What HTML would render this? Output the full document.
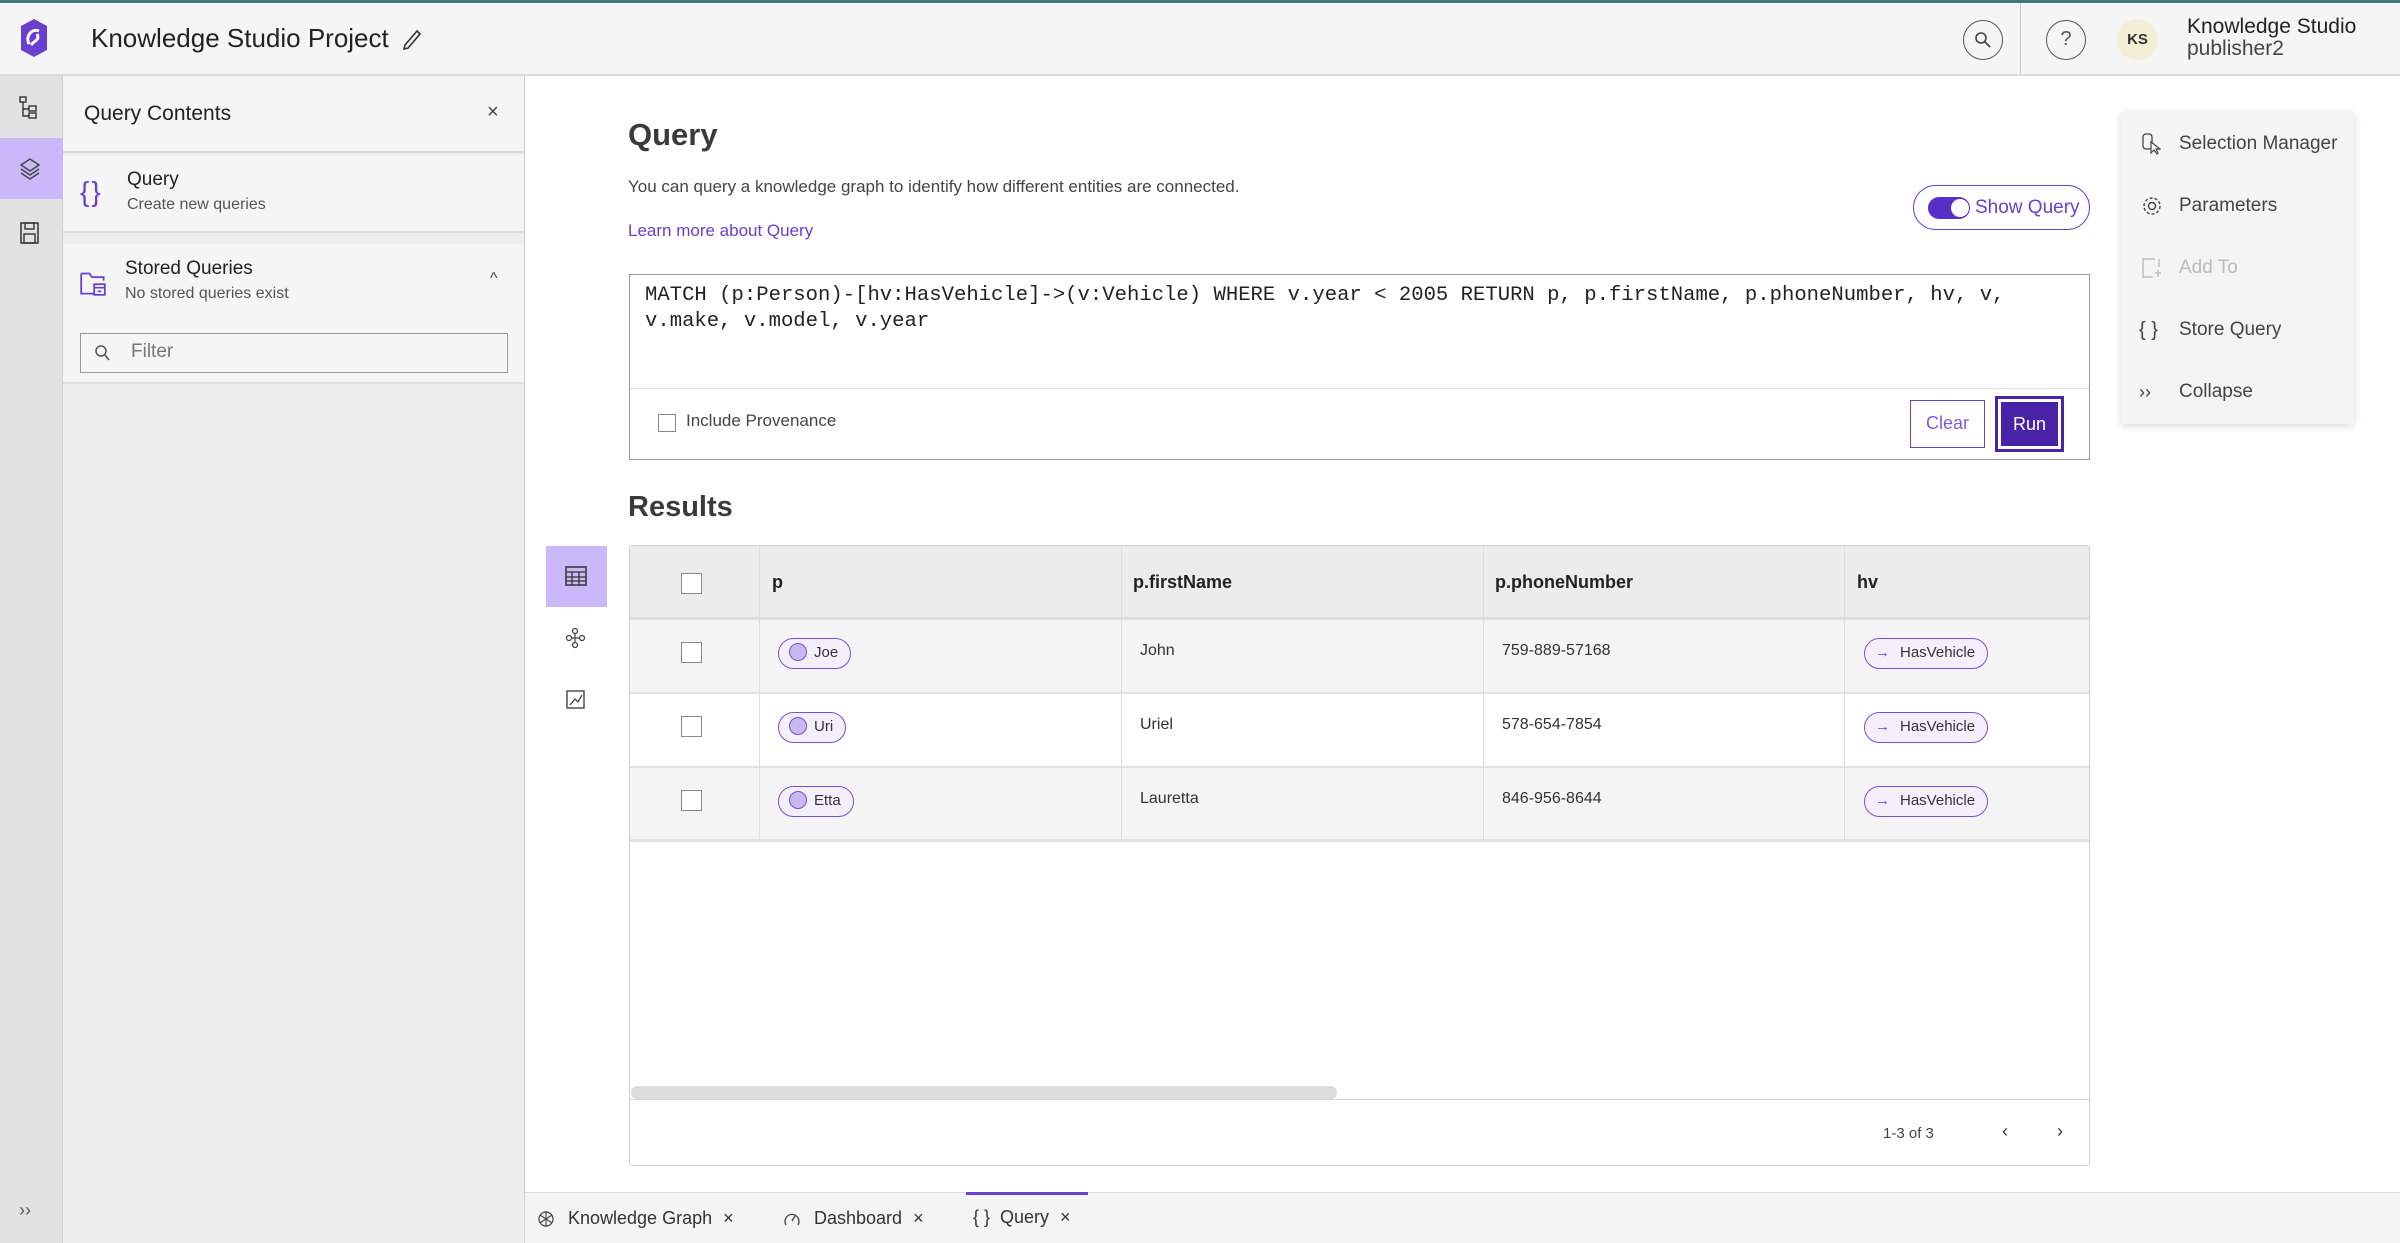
<!DOCTYPE html>
<html><head><meta charset="utf-8"><style>
*{box-sizing:border-box;margin:0;padding:0}
body{width:2400px;height:1243px;overflow:hidden;background:#fff;font-family:"Liberation Sans",sans-serif;color:#323232;position:relative}
.a{position:absolute}
.hdr{left:0;top:0;width:2400px;height:76px;background:#f5f5f5;border-top:3px solid #3d7a7a;border-bottom:2px solid #dcdcdc}
.rail{left:0;top:76px;width:63px;height:1167px;background:#e2e2e2;border-right:1px solid #d0d0d0}
.panel{left:63px;top:76px;width:462px;height:1167px;background:#eeeeee;border-right:1px solid #d4d4d4}
.t{white-space:nowrap}
.tbl{left:629px;top:545px;width:1461px;height:621px;border:1px solid #cfcfcf;border-radius:3px;background:#fff;overflow:hidden}
.row{position:absolute;left:0;width:1461px;height:74px;border-bottom:2px solid #e2e2e2}
.cell{position:absolute;top:0;height:100%;border-left:1px solid #dedede}
.cb{position:absolute;left:51px;width:21px;height:21px;border:1.5px solid #888;background:#fff}
.chip{position:absolute;height:31px;border:1.5px solid #7a4fd6;border-radius:16px;background:#f3f0fb;font-size:15px;line-height:28px;padding:0 12px 0 10px;color:#333}
.chip i{display:inline-block;width:18px;height:18px;border-radius:50%;background:#c9b8f0;border:1.5px solid #7a4fd6;vertical-align:-4px;margin-right:7px}
.menu div{height:62px;font-size:19px;color:#444;line-height:62px;padding-left:58px;position:relative}
</style></head><body>

<div class="a hdr"></div>
<svg class="a" style="left:20px;top:18px" width="28" height="40" viewBox="0 0 28 40"><polygon points="14,1 27,8 27,32 14,39 1,32 1,8" fill="#6a3fd0"/><path d="M9 26 C5 18 12 10 19 13 M11 27 C15 22 20 22 17 16" stroke="#fff" stroke-width="3" fill="none"/></svg>
<div class="a t" style="left:91px;top:23px;font-size:26px;color:#222">Knowledge Studio Project</div>
<svg class="a" style="left:402px;top:29px" width="20" height="22" viewBox="0 0 20 22"><path d="M15 2 L18 5 L6 19 L2 20 L3 16 Z" stroke="#333" stroke-width="1.6" fill="none"/></svg>
<div class="a" style="left:1963px;top:20px;width:40px;height:40px;border:1.5px solid #555;border-radius:50%"></div>
<svg class="a" style="left:1974px;top:31px" width="18" height="18" viewBox="0 0 18 18"><circle cx="7" cy="7" r="5" stroke="#444" stroke-width="1.6" fill="none"/><path d="M11 11 L16 16" stroke="#444" stroke-width="1.8"/></svg>
<div class="a" style="left:2020px;top:3px;width:1px;height:72px;background:#ccc"></div>
<div class="a" style="left:2046px;top:20px;width:40px;height:40px;border:1.5px solid #555;border-radius:50%;text-align:center;line-height:37px;font-size:20px;color:#555">?</div>
<div class="a" style="left:2117px;top:19px;width:41px;height:41px;border-radius:50%;background:#f2efd6;text-align:center;line-height:41px;font-size:15px;font-weight:bold;color:#333">KS</div>
<div class="a t" style="left:2187px;top:16px;font-size:21px;color:#222;line-height:22px">Knowledge Studio<br><span style="color:#444">publisher2</span></div>

<div class="a rail"></div>
<div class="a" style="left:0;top:138px;width:63px;height:61px;background:#cbb8fa"></div>
<svg class="a" style="left:19px;top:96px" width="22" height="24" viewBox="0 0 22 24"><rect x="1" y="1" width="6" height="5" fill="none" stroke="#333" stroke-width="1.4"/><path d="M4 6 V20 H10 M4 13 H10" stroke="#333" stroke-width="1.4" fill="none"/><rect x="10" y="10" width="7" height="5" fill="none" stroke="#333" stroke-width="1.4"/><rect x="10" y="17" width="7" height="5" fill="none" stroke="#333" stroke-width="1.4"/></svg>
<svg class="a" style="left:19px;top:157px" width="22" height="24" viewBox="0 0 22 24"><path d="M11 2 L20 8 L11 14 L2 8 Z M2 12 L11 18 L20 12 M2 16 L11 22 L20 16" stroke="#444" stroke-width="1.4" fill="none"/></svg>
<svg class="a" style="left:20px;top:222px" width="20" height="22" viewBox="0 0 20 22"><rect x="1" y="1" width="17" height="20" fill="none" stroke="#333" stroke-width="1.5"/><rect x="5" y="1" width="9" height="6" fill="none" stroke="#333" stroke-width="1.4"/><rect x="4" y="12" width="11" height="9" fill="none" stroke="#333" stroke-width="1.4"/></svg>
<div class="a t" style="left:19px;top:1200px;font-size:18px;color:#555">››</div>

<div class="a panel"></div>
<div class="a" style="left:63px;top:77px;width:461px;height:76px;background:#f5f5f5;border-bottom:2px solid #d9d9d9"></div>
<div class="a t" style="left:84px;top:102px;font-size:21px;color:#222">Query Contents</div>
<div class="a t" style="left:487px;top:101px;font-size:20px;color:#444">×</div>
<div class="a" style="left:63px;top:155px;width:461px;height:78px;background:#f5f5f5;border-bottom:2px solid #dcdcdc"></div>
<div class="a t" style="left:80px;top:176px;font-size:28px;color:#6a3fd0;letter-spacing:2px">{}</div>
<div class="a t" style="left:127px;top:169px;font-size:19px;color:#222">Query</div>
<div class="a t" style="left:127px;top:196px;font-size:16px;color:#555">Create new queries</div>
<div class="a" style="left:63px;top:244px;width:461px;height:140px;background:#f5f5f5;border-bottom:2px solid #e0e0e0"></div>
<svg class="a" style="left:80px;top:270px" width="26" height="26" viewBox="0 0 22 22"><path d="M1 3 H8 L10 6 H20 V9 M1 3 V20 H12" stroke="#6a3fd0" stroke-width="1.5" fill="none"/><rect x="12" y="12" width="9" height="9" fill="none" stroke="#6a3fd0" stroke-width="1.5"/><path d="M12 15 H21 M15 18 H18" stroke="#6a3fd0" stroke-width="1.4"/></svg>
<div class="a t" style="left:125px;top:258px;font-size:19px;color:#222">Stored Queries</div>
<div class="a t" style="left:125px;top:285px;font-size:16px;color:#555">No stored queries exist</div>
<div class="a t" style="left:490px;top:270px;font-size:16px;color:#444">^</div>
<div class="a" style="left:80px;top:333px;width:428px;height:40px;border:1.5px solid #999;background:#f5f5f5"></div>
<svg class="a" style="left:94px;top:344px" width="18" height="18" viewBox="0 0 18 18"><circle cx="7" cy="7" r="5" stroke="#555" stroke-width="1.5" fill="none"/><path d="M11 11 L15 16" stroke="#555" stroke-width="1.6"/></svg>
<div class="a t" style="left:131px;top:341px;font-size:19px;color:#777">Filter</div>

<div class="a t" style="left:628px;top:117px;font-size:31px;font-weight:bold;color:#3a3a3a">Query</div>
<div class="a t" style="left:628px;top:177px;font-size:17px;color:#444">You can query a knowledge graph to identify how different entities are connected.</div>
<div class="a t" style="left:628px;top:221px;font-size:17px;color:#6a3fd0">Learn more about Query</div>
<div class="a" style="left:1913px;top:185px;width:177px;height:45px;border:1.5px solid #6a3fd0;border-radius:23px"></div>
<div class="a" style="left:1928px;top:197px;width:42px;height:22px;border-radius:11px;background:#5a2fc8"></div>
<div class="a" style="left:1951px;top:199px;width:18px;height:18px;border-radius:50%;background:#fff"></div>
<div class="a t" style="left:1975px;top:197px;font-size:19px;color:#6a3fd0">Show Query</div>

<div class="a" style="left:629px;top:274px;width:1461px;height:186px;border:1.5px solid #999;background:#fff"></div>
<div class="a" style="left:630px;top:388px;width:1459px;height:1px;background:#ddd"></div>
<div class="a t" style="left:645px;top:283px;font-family:'Liberation Mono',monospace;font-size:20.6px;line-height:26px;color:#222">MATCH (p:Person)-[hv:HasVehicle]-&gt;(v:Vehicle) WHERE v.year &lt; 2005 RETURN p, p.firstName, p.phoneNumber, hv, v,<br>v.make, v.model, v.year</div>
<div class="a" style="left:658px;top:414px;width:18px;height:18px;border:1.5px solid #888;background:#fff"></div>
<div class="a t" style="left:686px;top:411px;font-size:17px;color:#444">Include Provenance</div>
<div class="a" style="left:1910px;top:400px;width:75px;height:48px;border:1.5px solid #6a3fd0;text-align:center;line-height:45px;font-size:18px;color:#7a5fd6">Clear</div>
<div class="a" style="left:1995px;top:396px;width:69px;height:56px;border:3px solid #4a22a8;padding:3px"><div style="background:#4a22a8;height:100%;color:#fff;text-align:center;line-height:44px;font-size:18px">Run</div></div>

<div class="a t" style="left:628px;top:491px;font-size:29px;font-weight:bold;color:#3a3a3a">Results</div>
<div class="a" style="left:546px;top:546px;width:61px;height:61px;background:#cbb8fa"></div>
<svg class="a" style="left:565px;top:566px" width="22" height="20" viewBox="0 0 22 20"><rect x="1" y="1" width="20" height="18" fill="none" stroke="#333" stroke-width="1.5"/><path d="M1 6 H21 M1 11 H21 M1 15 H21 M7 6 V19 M14 6 V19" stroke="#333" stroke-width="1.3"/></svg>
<svg class="a" style="left:565px;top:627px" width="22" height="22" viewBox="0 0 22 22"><circle cx="10" cy="4" r="2.5" fill="none" stroke="#444" stroke-width="1.3"/><circle cx="4" cy="11" r="2.5" fill="none" stroke="#444" stroke-width="1.3"/><circle cx="17" cy="11" r="2.5" fill="none" stroke="#444" stroke-width="1.3"/><circle cx="10" cy="18" r="2.5" fill="none" stroke="#444" stroke-width="1.3"/><path d="M6 11 H15 M10 6 V16" stroke="#444" stroke-width="1.2"/></svg>
<svg class="a" style="left:566px;top:690px" width="20" height="20" viewBox="0 0 20 20"><rect x="1" y="1" width="17" height="17" fill="none" stroke="#444" stroke-width="1.4"/><path d="M4 15 L9 9 L12 12 L16 5" stroke="#444" stroke-width="1.3" fill="none"/></svg>

<div class="a tbl">
 <div class="row" style="top:0;height:74px;background:#ececec;border-bottom:3px solid #dcdcdc">
  <div class="cb" style="top:27px"></div>
  <div class="cell" style="left:129px"></div><div class="cell" style="left:491px"></div><div class="cell" style="left:853px"></div><div class="cell" style="left:1214px"></div>
  <div class="a t" style="left:142px;top:26px;font-size:18px;font-weight:bold;color:#222">p</div>
  <div class="a t" style="left:503px;top:26px;font-size:18px;font-weight:bold;color:#222">p.firstName</div>
  <div class="a t" style="left:865px;top:26px;font-size:18px;font-weight:bold;color:#222">p.phoneNumber</div>
  <div class="a t" style="left:1227px;top:26px;font-size:18px;font-weight:bold;color:#222">hv</div>
 </div>
 <div class="row" style="top:74px;background:#f4f4f4">
  <div class="cb" style="top:22px"></div>
  <div class="cell" style="left:129px"></div><div class="cell" style="left:491px"></div><div class="cell" style="left:853px"></div><div class="cell" style="left:1214px"></div>
  <div class="chip" style="left:148px;top:18px"><i></i>Joe</div>
  <div class="a t" style="left:510px;top:22px;font-size:16px">John</div>
  <div class="a t" style="left:872px;top:22px;font-size:16px">759-889-57168</div>
  <div class="chip" style="left:1234px;top:18px"><span style="color:#6a3fd0;margin-right:10px">→</span>HasVehicle</div>
 </div>
 <div class="row" style="top:148px;background:#fff">
  <div class="cb" style="top:22px"></div>
  <div class="cell" style="left:129px"></div><div class="cell" style="left:491px"></div><div class="cell" style="left:853px"></div><div class="cell" style="left:1214px"></div>
  <div class="chip" style="left:148px;top:18px"><i></i>Uri</div>
  <div class="a t" style="left:510px;top:22px;font-size:16px">Uriel</div>
  <div class="a t" style="left:872px;top:22px;font-size:16px">578-654-7854</div>
  <div class="chip" style="left:1234px;top:18px"><span style="color:#6a3fd0;margin-right:10px">→</span>HasVehicle</div>
 </div>
 <div class="row" style="top:222px;background:#f4f4f4;border-bottom:3px solid #e2e2e2">
  <div class="cb" style="top:22px"></div>
  <div class="cell" style="left:129px"></div><div class="cell" style="left:491px"></div><div class="cell" style="left:853px"></div><div class="cell" style="left:1214px"></div>
  <div class="chip" style="left:148px;top:18px"><i></i>Etta</div>
  <div class="a t" style="left:510px;top:22px;font-size:16px">Lauretta</div>
  <div class="a t" style="left:872px;top:22px;font-size:16px">846-956-8644</div>
  <div class="chip" style="left:1234px;top:18px"><span style="color:#6a3fd0;margin-right:10px">→</span>HasVehicle</div>
 </div>
 <div class="a" style="left:1px;top:540px;width:706px;height:13px;background:#dcdcdc;border-radius:6px"></div>
 <div class="a" style="left:0;top:553px;width:1461px;height:1px;background:#d6d6d6"></div>
 <div class="a t" style="left:1253px;top:579px;font-size:15px;color:#444">1-3 of 3</div>
 <div class="a t" style="left:1372px;top:575px;font-size:18px;color:#333">‹</div>
 <div class="a t" style="left:1427px;top:575px;font-size:18px;color:#333">›</div>
</div>

<div class="a" style="left:2121px;top:112px;width:233px;height:312px;background:#f4f4f4;box-shadow:0 2px 8px rgba(0,0,0,.15)"></div>
<div class="a menu" style="left:2121px;top:113px;width:233px">
 <div>Selection Manager<svg class="a" style="left:20px;top:20px" width="20" height="22" viewBox="0 0 20 22"><rect x="2" y="1" width="9" height="15" rx="3" fill="none" stroke="#444" stroke-width="1.3"/><path d="M10 9 L10 20 L13 17 L16 21 L17 20 L15 16 L19 16 Z" fill="#fff" stroke="#444" stroke-width="1.2"/></svg></div>
 <div>Parameters<svg class="a" style="left:20px;top:20px" width="22" height="22" viewBox="0 0 22 22"><circle cx="11" cy="11" r="3.5" fill="none" stroke="#444" stroke-width="1.4"/><circle cx="11" cy="11" r="8" fill="none" stroke="#444" stroke-width="1.4" stroke-dasharray="3 2"/></svg></div>
 <div style="color:#bbb">Add To<svg class="a" style="left:20px;top:20px" width="22" height="22" viewBox="0 0 22 22"><path d="M14 2 H2 V20 H12 M18 2 V10 M14 16 H20 M17 13 V20" stroke="#bbb" stroke-width="1.4" fill="none"/></svg></div>
 <div>Store Query<span class="a" style="left:18px;top:0;font-size:20px">{ }</span></div>
 <div>Collapse<span class="a" style="left:18px;top:0;font-size:18px">››</span></div>
</div>

<div class="a" style="left:525px;top:1192px;width:1875px;height:51px;background:#f4f4f4;border-top:1px solid #ddd"></div>
<div class="a" style="left:966px;top:1192px;width:122px;height:3px;background:#6a3fd0"></div>
<svg class="a" style="left:537px;top:1209px" width="18" height="20" viewBox="0 0 18 20"><circle cx="9" cy="10" r="7" fill="none" stroke="#444" stroke-width="1.2"/><path d="M3 6 L15 14 M3 14 L15 6 M9 2 V18" stroke="#444" stroke-width="1.1"/></svg>
<div class="a t" style="left:568px;top:1208px;font-size:18px;color:#333">Knowledge Graph <span style="margin-left:6px">×</span></div>
<svg class="a" style="left:783px;top:1210px" width="18" height="18" viewBox="0 0 18 18"><path d="M3 15 A7 7 0 1 1 15 15" fill="none" stroke="#444" stroke-width="1.3"/><path d="M9 11 L12 6" stroke="#444" stroke-width="1.3"/></svg>
<div class="a t" style="left:814px;top:1208px;font-size:18px;color:#333">Dashboard <span style="margin-left:6px">×</span></div>
<div class="a t" style="left:973px;top:1207px;font-size:18px;color:#333">{ }&nbsp; Query <span style="margin-left:6px">×</span></div>
</body></html>
